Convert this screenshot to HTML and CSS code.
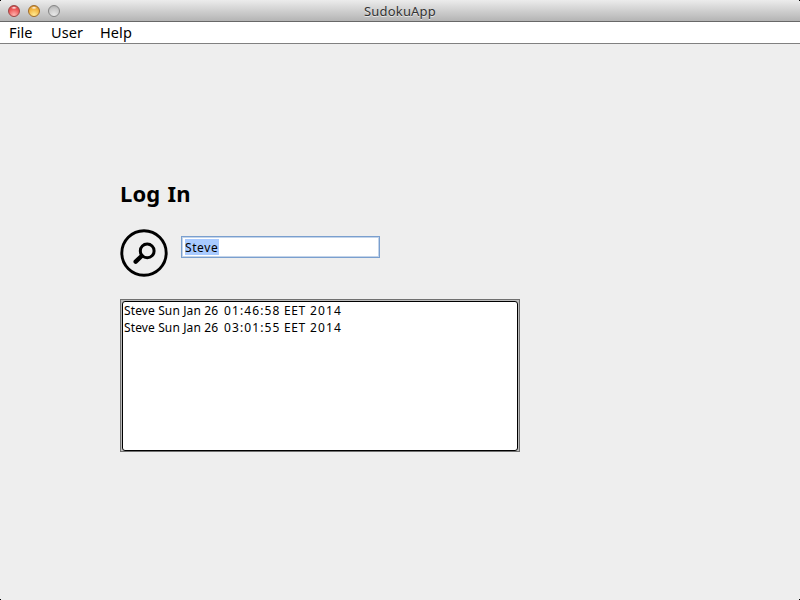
FILE: index.html
```html
<!DOCTYPE html>
<html lang="en">
<head>
<meta charset="utf-8">
<title>SudokuApp</title>
<link rel="stylesheet" href="styles.css">
</head>
<body>
<header class="titlebar">
  <div class="lights"><i class="light red"></i><i class="light amber"></i><i class="light gray"></i></div>
  <span class="title">SudokuApp</span>
</header>
<nav class="menubar"><span class="file">File</span><span class="user">User</span><span class="help">Help</span></nav>
<main class="content">
  <h1>Log In</h1>
  <div class="login">
    <svg class="search" viewBox="0 0 48 48" width="48" height="48" fill="none" stroke="#000">
      <circle cx="24" cy="24" r="22.2" stroke-width="2.9"/>
      <circle cx="27.2" cy="21.9" r="6.9" stroke-width="3"/>
      <path d="M21.6 27L15.7 32.7" stroke-width="4.4" stroke-linecap="round"/>
    </svg>
    <div class="field"><span class="selected">Steve</span></div>
  </div>
  <div class="list"><div class="rows">
    <div class="row"><span class="name">Steve Sun Jan 26</span> <span class="time">01:46:58</span> <span class="zone">EET</span> <span class="year">2014</span></div>
    <div class="row"><span class="name">Steve Sun Jan 26</span> <span class="time">03:01:55</span> <span class="zone">EET</span> <span class="year">2014</span></div>
  </div></div>
</main>
</body>
</html>
```
FILE: styles.css
```css
* { box-sizing: border-box; }
body {
  margin: 0; width: 800px; height: 600px; overflow: hidden;
  background: linear-gradient(#000, #000) 0 100% / 1px 1px no-repeat,
    linear-gradient(#000, #000) 100% 100% / 1px 1px no-repeat, #eee;
  color: #000; font-family: "Noto Sans", "Open Sans", sans-serif;
}
.titlebar {
  height: 22px; display: grid; grid-template-columns: 1fr auto 1fr; align-items: center;
  background: linear-gradient(#000, #000) 0 0 / 1px 1px no-repeat,
    linear-gradient(#000, #000) 100% 0 / 1px 1px no-repeat,
    linear-gradient(#ececec, #b4b4b4);
  border-bottom: 1px solid #686868;
}
.lights { display: flex; gap: 8px; padding-left: 8px; padding-top: 1px; }
.light { width: 12px; height: 12px; border-radius: 50%; border: 1px solid; }
.red { border-color: #9c4543; background: radial-gradient(ellipse 3px 1.5px at 50% 18%, #fff, transparent), radial-gradient(circle at 50% 90%, #ffb4ae, #ec5555 60%, #c33c40); }
.amber { border-color: #a06c28; background: radial-gradient(ellipse 3px 1.5px at 50% 18%, #fff, transparent), radial-gradient(circle at 50% 90%, #ffec94, #f2b440 60%, #c98425); }
.gray { border-color: #858585; background: radial-gradient(circle at 50% 90%, #e8e8e8, #cacaca 60%, #aaa); }
.title { font-size: 13px; line-height: 20px; padding-top: 1px; letter-spacing: .18px; color: #333; text-shadow: 0 1px 0 #e8e8e8; }
.menubar {
  height: 22px; display: flex; padding-left: 9px; background: #fff;
  border-bottom: 1px solid #808080; font-size: 14.5px; line-height: 20px; letter-spacing: .1px;
}
.file { width: 42px; }
.user { width: 49px; }
.content { padding-left: 120px; padding-top: 134px; }
h1 { margin: 0; height: 52px; font-size: 22px; line-height: 30px; font-weight: 700; letter-spacing: .1px; word-spacing: 1.5px; }
.login { display: flex; gap: 13px; height: 69px; align-items: flex-start; }
.search { display: block; margin-top: -1px; flex: none; }
.field {
  width: 199px; height: 22px; margin-top: 6px; padding: 1px 3px;
  border: 1px solid #7a9fce; box-shadow: inset 0 0 0 1px #c3d4ea; background: #fff; font-size: 12px;
}
.selected { display: block; width: 34px; height: 16px; margin-top: 1px; line-height: 17px; background: #a8caff; letter-spacing: .6px; white-space: nowrap; }
.list { width: 400px; height: 153px; border: 1px solid #707070; background: #bdbdbd; padding: 1px 1px 0; }
.rows { height: 150px; border: 1px solid #000; border-radius: 3px; background: #fff; padding-left: 1px; }
.row { height: 17px; display: flex; font-size: 12px; line-height: 17px; white-space: nowrap; }
.name { width: 100px; letter-spacing: .12px; }
.time { width: 60px; letter-spacing: 1.1px; }
.zone { width: 26px; letter-spacing: .6px; }
.year { letter-spacing: 1.1px; }
```
